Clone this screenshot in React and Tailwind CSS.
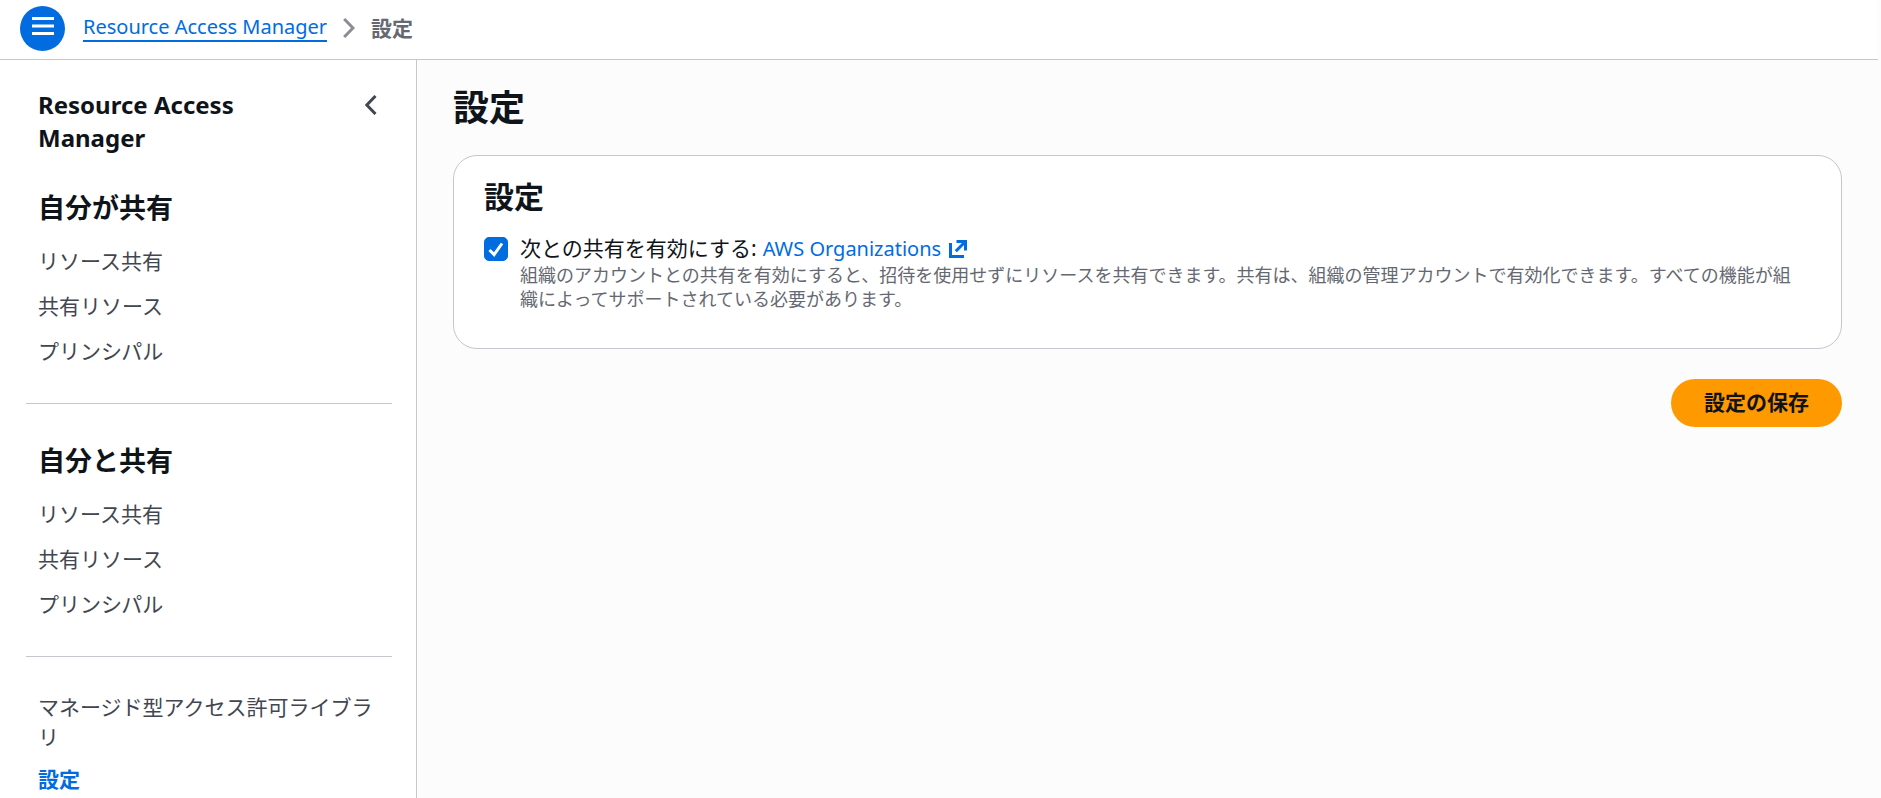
import { useState } from "react";

const sections = [
  { title: "自分が共有", items: ["リソース共有", "共有リソース", "プリンシパル"] },
  { title: "自分と共有", items: ["リソース共有", "共有リソース", "プリンシパル"] },
];

function MenuIcon() {
  return (
    <svg width="22" height="20" viewBox="0 0 22 20" fill="none" stroke="currentColor" strokeWidth="3" aria-hidden="true">
      <path d="M0 2.5h22M0 10h22M0 17.5h22" />
    </svg>
  );
}

function Chevron({ left = false, className }) {
  return (
    <svg width="12" height="20" viewBox="0 0 12 20" fill="none" stroke="currentColor" strokeWidth="3" className={className} aria-hidden="true">
      <path d={left ? "M10.5 1 1.8 10l8.7 9" : "M1.2 1l8.8 9-8.8 9"} />
    </svg>
  );
}

function ExternalIcon() {
  return (
    <svg width="18" height="18" viewBox="0 0 18 18" fill="none" stroke="currentColor" strokeWidth="3" className="shrink-0" aria-hidden="true">
      <path d="M7.5 1.5h9v9M16.2 1.8 6.8 11.2M1.5 3v13.5H15" />
    </svg>
  );
}

function NavSection({ title, items }) {
  return (
    <section className="border-b border-[#c6c6cd] px-3 pb-[37px]">
      <h3 className="text-[27px] leading-8 font-bold text-[#0f141a]">{title}</h3>
      <ul className="mt-[22px] flex flex-col gap-[15px]">
        {items.map((item) => (
          <li key={item} className="leading-[30px]">
            <a href="#" className="block">{item}</a>
          </li>
        ))}
      </ul>
    </section>
  );
}

export default function App() {
  const [enabled, setEnabled] = useState(true);
  return (
    <div className="flex h-screen flex-col overflow-hidden bg-[#fcfcfd] font-['Noto_Sans','Noto_Sans_CJK_JP',sans-serif] text-[21px] text-[#0f141a]">
      <header className="mr-[3px] flex h-[60px] shrink-0 items-center border-b border-[#c6c6cd] bg-white px-5 pb-[3px]">
        <button type="button" aria-label="メニュー" className="flex size-[45px] items-center justify-center rounded-full bg-[#006ce0] pb-1 text-white">
          <MenuIcon />
        </button>
        <nav aria-label="パンくずリスト" className="ml-[18px] flex items-center leading-[26px]">
          <a href="#" className="border-b-2 border-[#006ce0] text-[20px] text-[#006ce0]">Resource Access Manager</a>
          <Chevron className="ml-4 text-[#8c8c94]" />
          <span className="ml-4 font-bold text-[#656871]">設定</span>
        </nav>
      </header>
      <div className="flex min-h-0 grow">
        <aside className="w-[417px] shrink-0 overflow-hidden border-r border-[#c6c6cd] bg-white pt-7 pr-6 pl-[26px] text-[#424650]">
          <div className="flex items-start justify-between px-3">
            <h2 className="w-[220px] text-[24px] leading-[33px] font-bold text-[#0f141a]">Resource Access Manager</h2>
            <button type="button" aria-label="ナビゲーションを閉じる" className="mt-[7px] mr-[3px]">
              <Chevron left />
            </button>
          </div>
          <nav className="mt-[38px] flex flex-col gap-[41px]">
            {sections.map((s) => (
              <NavSection key={s.title} {...s} />
            ))}
            <ul className="-mt-1.5 flex flex-col gap-3 px-3 leading-[30px]">
              <li><a href="#" className="block">マネージド型アクセス許可ライブラリ</a></li>
              <li><a href="#" aria-current="page" className="block font-bold text-[#006ce0]">設定</a></li>
            </ul>
          </nav>
        </aside>
        <main className="min-w-0 grow pt-[25px] pr-[39px] pl-9">
          <h1 className="text-[36px] leading-[45px] font-bold">設定</h1>
          <section className="mt-[25px] rounded-3xl border border-[#c6c6cd] bg-white px-[30px] pt-6 pb-[37px]">
            <h2 className="text-[30px] leading-[34px] font-bold">設定</h2>
            <div className="mt-5 flex gap-3">
              <span className="mt-[3px] grid size-6 shrink-0">
                <input
                  id="org-sharing"
                  type="checkbox"
                  checked={enabled}
                  onChange={(e) => setEnabled(e.target.checked)}
                  aria-describedby="org-sharing-help"
                  className="peer col-start-1 row-start-1 size-6 appearance-none rounded-[5px] border border-[#8c8c94] bg-white checked:border-[#006ce0] checked:bg-[#006ce0]"
                />
                <svg viewBox="0 0 24 24" fill="none" stroke="white" strokeWidth="3" className="pointer-events-none invisible col-start-1 row-start-1 size-6 peer-checked:visible" aria-hidden="true">
                  <path d="M5.5 13l4.6 4.6L18 6.5" />
                </svg>
              </span>
              <div className="min-w-0 pr-3">
                <div className="flex items-center gap-1.5 leading-[29px]">
                  <label htmlFor="org-sharing">次との共有を有効にする:</label>
                  <a href="#" className="flex items-center gap-2 text-[20px] text-[#006ce0]">
                    AWS Organizations
                    <ExternalIcon />
                  </a>
                </div>
                <p id="org-sharing-help" className="text-[18px] leading-6 text-[#656871]">
                  組織のアカウントとの共有を有効にすると、招待を使用せずにリソースを共有できます。共有は、組織の管理アカウントで有効化できます。すべての機能が組織によってサポートされている必要があります。
                </p>
              </div>
            </div>
          </section>
          <div className="mt-[30px] flex justify-end">
            <button type="button" className="h-12 rounded-full bg-[#ff9900] px-[33px] font-bold">設定の保存</button>
          </div>
        </main>
      </div>
    </div>
  );
}
